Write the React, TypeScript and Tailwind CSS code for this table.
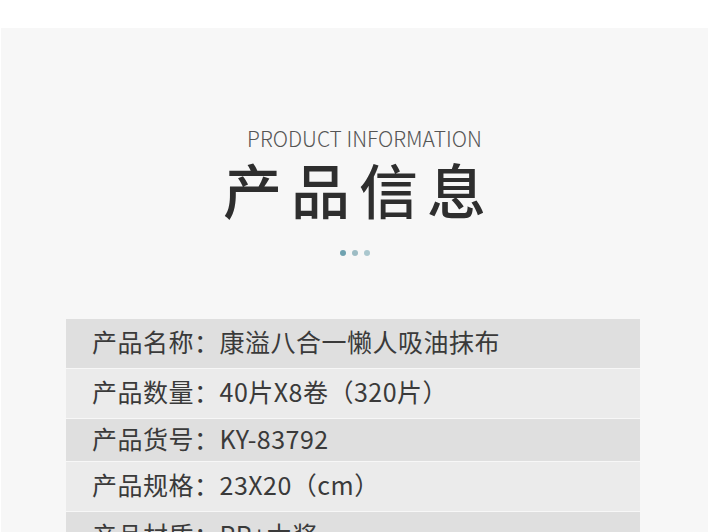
const rows = [
  { label: '产品名称：', value: '康溢八合一懒人吸油抹布', h: 'h-[49px]', bg: 'bg-[#dfdfdf]' },
  { label: '产品数量：', value: '40片X8卷（320片）', h: 'h-[49px]', bg: 'bg-[#ebebeb]' },
  { label: '产品货号：', value: 'KY-83792', h: 'h-[42px]', bg: 'bg-[#dfdfdf]' },
  { label: '产品规格：', value: '23X20（cm）', h: 'h-[49px]', bg: 'bg-[#ebebeb]' },
  { label: '产品材质：', value: 'PP+木浆', h: 'h-[49px]', bg: 'bg-[#dfdfdf]' },
]

export default function App() {
  return (
    <div className="w-[710px] h-[532px] overflow-hidden bg-white pt-[28px] pl-[1px] pr-[2px]">
      <div
        className="h-full bg-[#f7f7f7] flex flex-col items-center"
        style={{ fontFamily: '"Noto Sans CJK SC", "Noto Sans", sans-serif' }}
      >
        <div className="mt-[98px] ml-[20px] text-[21px] leading-[24px] font-light tracking-[0px] text-[#555]">
          PRODUCT INFORMATION
        </div>
        <h1 className="mt-[9px] text-[59px] leading-[60px] font-medium tracking-[9px] pl-[9px] text-[#2e2e2e]">
          产品信息
        </h1>
        <div className="mt-[31px] flex gap-[6px]">
          <span className="w-[6px] h-[6px] rounded-full bg-[#6fa2b0]" />
          <span className="w-[6px] h-[6px] rounded-full bg-[#9dbcc4]" />
          <span className="w-[6px] h-[6px] rounded-full bg-[#aac7ce]" />
        </div>

        <div className="mt-[63px] w-[574px] flex flex-col gap-[1px] self-start ml-[65px]">
          {rows.map((r) => (
            <div
              key={r.label}
              className={`${r.h} ${r.bg} flex items-center pl-[26px] pb-[4px] text-[25px] leading-none tracking-[0.5px] text-[#3a3a3a] shrink-0`}
            >
              <span>{r.label}</span>
              <span>{r.value}</span>
            </div>
          ))}
        </div>
      </div>
    </div>
  )
}
